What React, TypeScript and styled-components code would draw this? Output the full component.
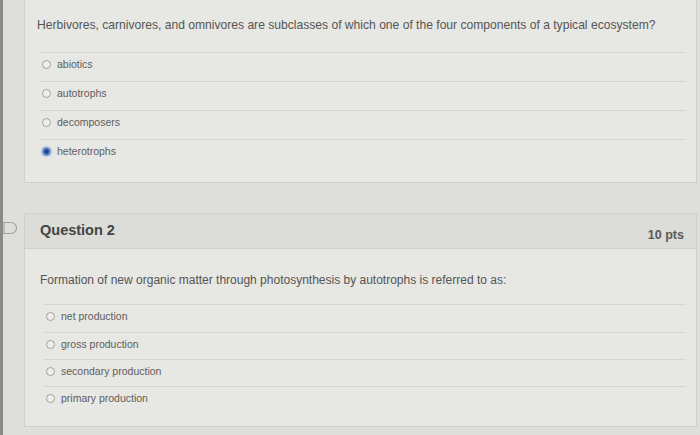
import React from 'react'
import styled, { createGlobalStyle } from 'styled-components'

const GlobalStyle = createGlobalStyle`
  html, body {
    margin: 0;
    padding: 0;
    background: #dededa;
    font-family: "Liberation Sans", Arial, sans-serif;
    overflow: hidden;
  }
`

const Page = styled.div`
  width: 700px;
  height: 435px;
  display: flex;
  flex-direction: column;
  gap: 30px;
  border-left: 3px solid #8a8a86;
  box-sizing: border-box;
  background: #dededa;
`

const Block = styled.div`
  display: flex;
  align-items: flex-start;
`

const Gutter = styled.div`
  width: 21px;
  flex-shrink: 0;
  padding-top: 8px;
  display: flex;
  justify-content: flex-start;
`

const Card = styled.div<{ $open?: boolean }>`
  width: 673px;
  background: #e7e7e3;
  border: 1px solid #cfcfcb;
  border-top: ${p => (p.$open ? 'none' : '1px solid #cfcfcb')};
  box-sizing: border-box;
`

const Header = styled.div`
  height: 35px;
  display: flex;
  align-items: center;
  justify-content: space-between;
  padding: 0 12px 3px 15px;
  box-sizing: border-box;
  background: #dcdcd8;
  border-bottom: 1px solid #cfcfcb;
`

const Title = styled.div`
  font-size: 14.5px;
  font-weight: bold;
  color: #444;
`

const Points = styled.div`
  font-size: 12.5px;
  font-weight: bold;
  color: #5a5a5a;
  margin-top: 10px;
`

const Body = styled.div<{ $top: number; $bottom: number; $indent: number }>`
  padding: ${p => p.$top}px 10px ${p => p.$bottom}px ${p => p.$indent}px;
`

const Prompt = styled.div<{ $gap: number; $size: number }>`
  font-size: ${p => p.$size}px;
  line-height: 14px;
  color: #555;
  margin-bottom: ${p => p.$gap}px;
`

const Options = styled.div<{ $inset: number }>`
  margin-left: ${p => p.$inset}px;
`

const Option = styled.label<{ $h: number }>`
  display: flex;
  align-items: flex-start;
  gap: 6px;
  height: ${p => p.$h}px;
  padding: 5px 0 0 2px;
  border-top: 1px solid #d4d4d0;
  font-size: 10.5px;
  line-height: 12px;
  color: #5e5e5e;
  box-sizing: border-box;
`

const Radio = styled.span<{ $checked?: boolean }>`
  width: 9px;
  height: 9px;
  margin-top: 2px;
  border-radius: 50%;
  box-sizing: border-box;
  flex-shrink: 0;
  border: 1px solid ${p => (p.$checked ? '#5079c0' : '#a0a09e')};
  background: ${p => (p.$checked ? 'radial-gradient(circle, #24448a 0 2px, #6a92d8 2.6px)' : '#ededea')};
  box-shadow: ${p => (p.$checked ? '0 0 0 1.5px #ccd7ec' : 'none')};
`

const Flag = () => (
  <svg width="14" height="14" viewBox="0 0 14 14">
    <path d="M1 1.5 H8 A5.5 5.5 0 0 1 8 12.5 H1 Z" fill="none" stroke="#a2a2a0" strokeWidth="1.2" />
  </svg>
)

const q1 = ['abiotics', 'autotrophs', 'decomposers', 'heterotrophs']
const q2 = ['net production', 'gross production', 'secondary production', 'primary production']
const q2Heights = [28, 27, 27, 27]

export default function App() {
  return (
    <>
      <GlobalStyle />
      <Page>
        <Block>
          <Gutter />
          <Card $open>
            <Body $top={18} $bottom={14} $indent={12}>
              <Prompt $gap={20} $size={12.1}>
                Herbivores, carnivores, and omnivores are subclasses of which one of the four components of a typical ecosystem?
              </Prompt>
              <Options $inset={3}>
                {q1.map((o, i) => (
                  <Option key={o} $h={29}>
                    <Radio $checked={i === 3} />
                    <span>{o}</span>
                  </Option>
                ))}
              </Options>
            </Body>
          </Card>
        </Block>
        <Block>
          <Gutter>
            <Flag />
          </Gutter>
          <Card>
            <Header>
              <Title>Question 2</Title>
              <Points>10 pts</Points>
            </Header>
            <Body $top={24} $bottom={13} $indent={15}>
              <Prompt $gap={17} $size={12}>
                Formation of new organic matter through photosynthesis by autotrophs is referred to as:
              </Prompt>
              <Options $inset={4}>
                {q2.map((o, i) => (
                  <Option key={o} $h={q2Heights[i]}>
                    <Radio />
                    <span>{o}</span>
                  </Option>
                ))}
              </Options>
            </Body>
          </Card>
        </Block>
      </Page>
    </>
  )
}
